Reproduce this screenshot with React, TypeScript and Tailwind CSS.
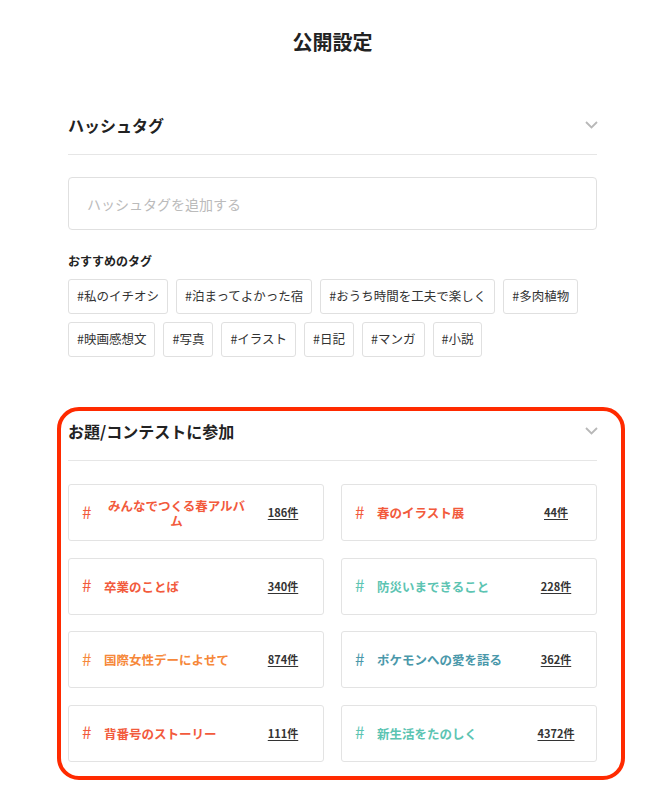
import React from "react";

const FONT = {
  fontFamily: '"Noto Sans CJK JP", "Noto Sans", sans-serif',
};

const TAGS_ROW = [
  "#私のイチオシ",
  "#泊まってよかった宿",
  "#おうち時間を工夫で楽しく",
  "#多肉植物",
  "#映画感想文",
  "#写真",
  "#イラスト",
  "#日記",
  "#マンガ",
  "#小説",
];

const CONTESTS = [
  { name: "みんなでつくる春アルバム", count: "186件", color: "text-[#f25a3c]" },
  { name: "春のイラスト展", count: "44件", color: "text-[#f25a3c]" },
  { name: "卒業のことば", count: "340件", color: "text-[#f25a3c]" },
  { name: "防災いまできること", count: "228件", color: "text-[#5cc4b2]" },
  { name: "国際女性デーによせて", count: "874件", color: "text-[#f6883a]" },
  { name: "ポケモンへの愛を語る", count: "362件", color: "text-[#4a98aa]" },
  { name: "背番号のストーリー", count: "111件", color: "text-[#f25a3c]" },
  { name: "新生活をたのしく", count: "4372件", color: "text-[#5cc4b2]" },
];

function Chevron() {
  return (
    <svg width="13" height="8" viewBox="0 0 13 8" className="mr-[-1px] shrink-0">
      <polyline
        points="1,1 6.5,6.5 12,1"
        fill="none"
        stroke="#b8b8b8"
        strokeWidth="1.8"
      />
    </svg>
  );
}

function SectionHeader({ title }: { title: string }) {
  return (
    <div className="flex items-center justify-between border-b border-[#e6e6e6] pb-[17px]">
      <h2 className="text-[16px] leading-6 font-bold text-[#222]">{title}</h2>
      <Chevron />
    </div>
  );
}

function ContestCard({
  name,
  count,
  color,
}: {
  name: string;
  count: string;
  color: string;
}) {
  return (
    <div className="flex h-[57px] items-center rounded-[3px] border border-[#e3e3e3] pl-[13px] pr-[10px]">
      <span className={`w-[12px] shrink-0 text-[17px] leading-none -mt-[3px] ${color}`}>
        #
      </span>
      <span
        className={`ml-[10px] mr-[4px] text-center text-[12.5px] leading-[15px] font-bold ${color}`}
      >
        {name}
      </span>
      <span className="ml-auto w-[60px] shrink-0 text-center text-[11px] font-bold text-[#333] underline underline-offset-2">
        {count}
      </span>
    </div>
  );
}

export default function App() {
  return (
    <div className="min-h-screen bg-white pb-[30px]" style={FONT}>
      <div className="ml-[68px] w-[529px]">
        <h1 className="pt-[30px] text-center text-[20px] leading-6 font-bold text-[#222]">
          公開設定
        </h1>

        <section className="mt-[59px]">
          <SectionHeader title="ハッシュタグ" />
          <input
            className="mt-[22px] h-[53px] w-full rounded-[4px] border border-[#e0e0e0] pl-[18px] text-[14px] text-[#333] outline-none placeholder:text-[#bbbbbb]"
            placeholder="ハッシュタグを追加する"
          />
          <p className="mt-[22px] text-[12px] leading-[18px] font-bold text-[#222]">
            おすすめのタグ
          </p>
          <div className="mt-[9px] flex flex-wrap gap-x-[8px] gap-y-[8px]">
            {TAGS_ROW.map((t) => (
              <span
                key={t}
                className="flex h-[35px] items-center rounded-[3px] border border-[#e0e0e0] px-[8px] text-[12.5px] text-[#333]"
              >
                {t}
              </span>
            ))}
          </div>
        </section>

        <section className="relative mt-[62px]">
          <div className="pointer-events-none absolute -top-[12px] -bottom-[18px] -left-[11px] -right-[28px] rounded-[22px] border-[4px] border-[#ff2a00]" />
          <SectionHeader title="お題/コンテストに参加" />
          <div className="mt-[23px] grid grid-cols-2 gap-x-[17px] gap-y-[16.5px]">
            {CONTESTS.map((c) => (
              <ContestCard key={c.name} {...c} />
            ))}
          </div>
        </section>
      </div>
    </div>
  );
}
